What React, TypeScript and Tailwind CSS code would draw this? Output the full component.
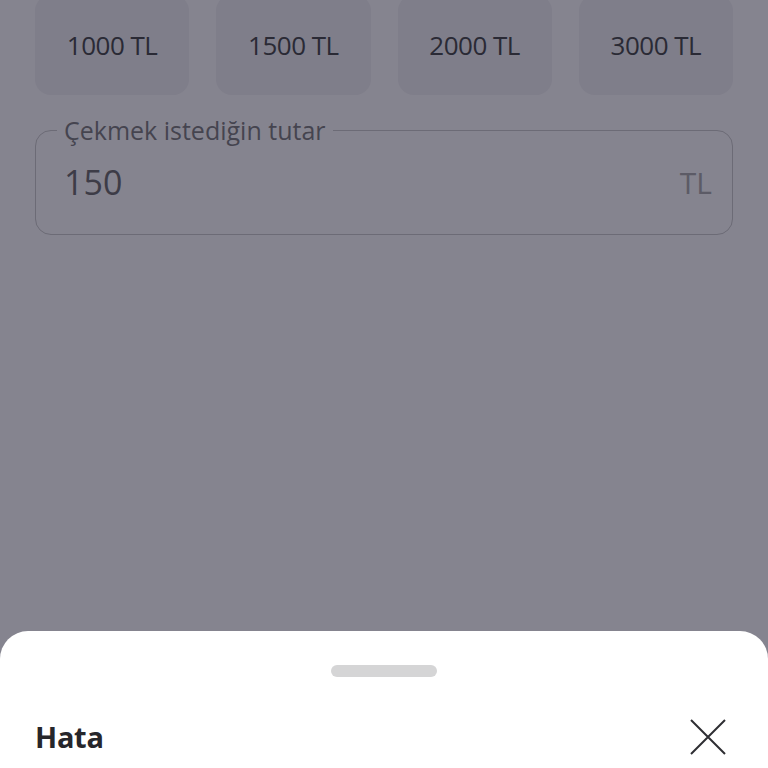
import React from "react";

export default function App() {
  const amounts = ["1000 TL", "1500 TL", "2000 TL", "3000 TL"];
  return (
    <div
      className="relative w-[768px] h-[768px] overflow-hidden bg-[#85848f] flex flex-col"
      style={{ fontFamily: '"Open Sans", "Noto Sans", sans-serif' }}
    >
      <div className="flex flex-col px-[35px] gap-[35px] mt-[-5px]">
        <div className="grid grid-cols-4 gap-[27px]">
          {amounts.map((a) => (
            <div
              key={a}
              className="h-[100px] rounded-[16px] bg-[#7f7e8a] flex items-center justify-center text-[26px] text-[#2a2a35] tracking-[-0.5px]"
            >
              {a}
            </div>
          ))}
        </div>
        <fieldset className="rounded-[16px] border border-[#6c6b76] mt-[-13px] p-0 m-0 min-w-0">
          <legend className="ml-[21px] px-[7px] text-[25px] leading-[26px] text-[#45444f]">
            Çekmek istediğin tutar
          </legend>
          <div className="h-[91px] px-[28px] pb-[12px] flex w-full items-center justify-between">
            <span className="text-[34px] text-[#3d3c47]">150</span>
            <span className="text-[30px] text-[#5c5b66] mr-[-8px]">TL</span>
          </div>
        </fieldset>
      </div>
      <div className="absolute left-0 right-0 top-[631px] bottom-0 bg-white rounded-t-[28px] flex flex-col">
        <div className="flex justify-center pt-[34px]">
          <div className="w-[106px] h-[12px] rounded-full bg-[#d5d5d6]" />
        </div>
        <div className="flex items-center justify-between pl-[35px] pr-[42px] mt-[38px]">
          <span className="text-[29px] font-bold text-[#26262b] tracking-[-0.3px]">Hata</span>
          <svg width="36" height="36" viewBox="0 0 36 36" fill="none">
            <path d="M1 1 L35 35 M35 1 L1 35" stroke="#2e2e33" strokeWidth="2" />
          </svg>
        </div>
      </div>
    </div>
  );
}
